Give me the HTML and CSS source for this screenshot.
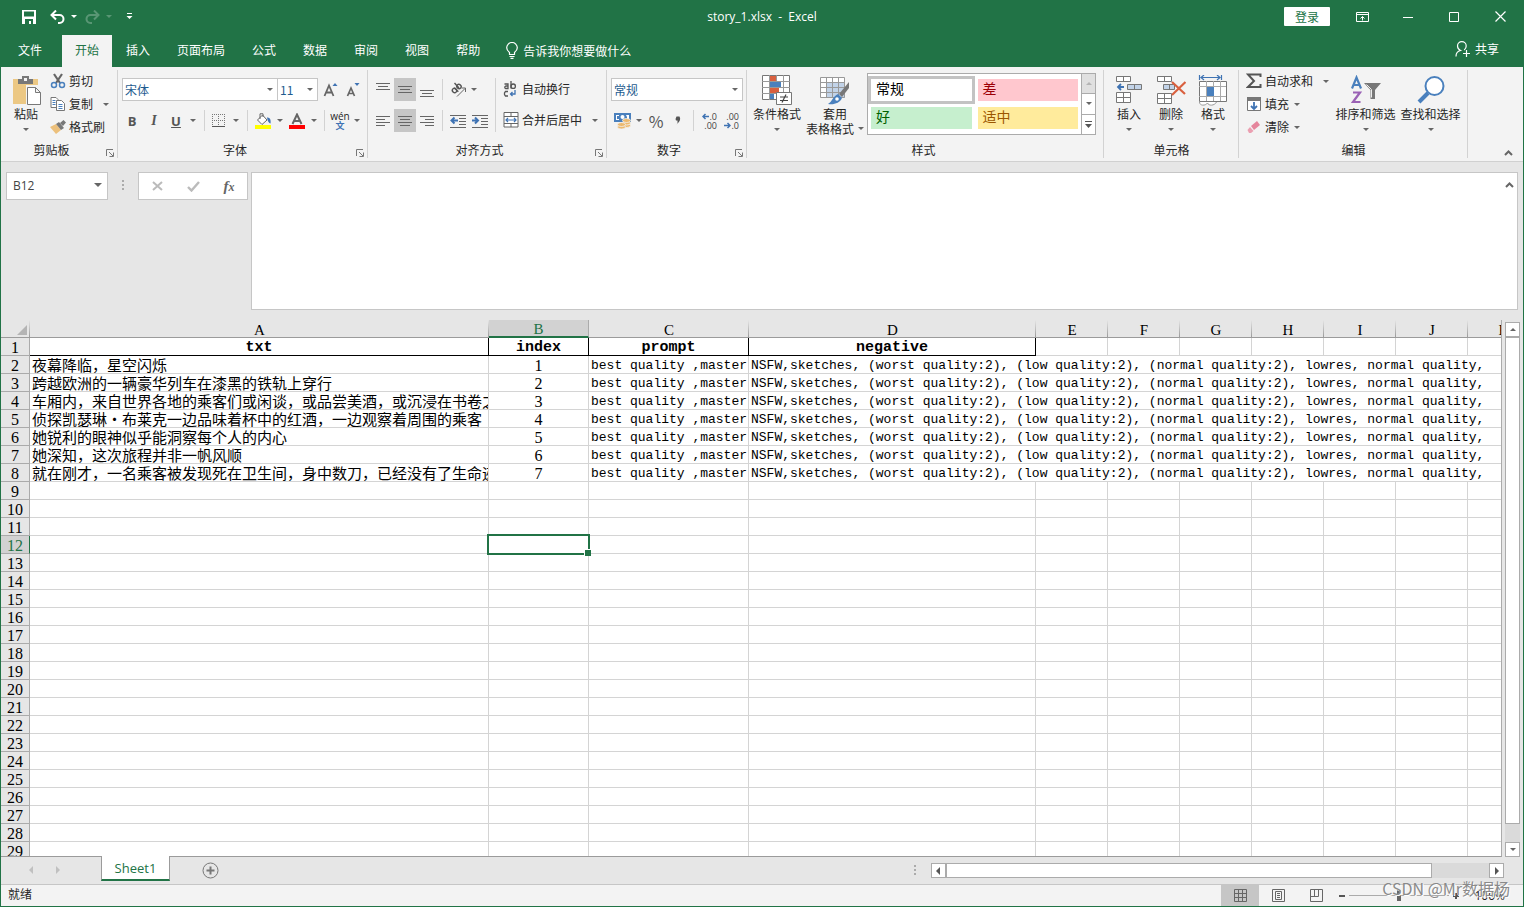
FILE: index.html
```html
<!DOCTYPE html>
<html lang="zh-CN">
<head>
<meta charset="utf-8">
<title>story_1.xlsx - Excel</title>
<link rel="stylesheet" href="styles.css">
</head>
<body>
<div class="window">
<header class="titlebar">
  <div class="quick">
    <button class="qbtn" aria-label="保存"><svg width="14" height="14" viewBox="0 0 14 14"><path fill="#fff" fill-rule="evenodd" d="M0 0h14v14H0zM2 1.500h10v5H2zM3 9h8v5H9v-3H7v3H3z"/></svg></button>
    <button class="qbtn wide" aria-label="撤消"><svg width="15" height="14" viewBox="0 0 15 14"><path d="M6 0.500L1.500 5l4.500 4.500M2 5h7.500a4 4 0 0 1 0 8H8" fill="none" stroke="#fff" stroke-width="2"/></svg><i class="caret light"></i></button>
    <button class="qbtn wide dim" aria-label="恢复"><svg width="15" height="14" viewBox="0 0 15 14"><path d="M9 0.500L13.500 5 9 9.500M13 5H5.500a4 4 0 0 0 0 8H7" fill="none" stroke="#fff" stroke-width="2"/></svg><i class="caret light"></i></button>
    <button class="qbtn" aria-label="自定义快速访问工具栏"><svg width="7" height="7" viewBox="0 0 7 7"><path d="M1 0h5v1H1zM0.500 3h6L3.500 6z" fill="#fff"/></svg></button>
  </div>
  <h1 class="title">story_1.xlsx&nbsp; -&nbsp; Excel</h1>
  <div class="wincontrols">
    <button class="signin">登录</button>
    <button class="wbtn" aria-label="功能区显示选项"><svg width="13" height="10" viewBox="0 0 13 10"><path d="M0.500 0.500h12v9H0.500zM0 2.500h13M6.500 8.500V4.500M4.500 6.500l2-2 2 2" fill="none" stroke="#fff"/></svg></button>
    <button class="wbtn" aria-label="最小化"><svg width="10" height="10" viewBox="0 0 10 10"><path d="M0 5.500h10" stroke="#fff"/></svg></button>
    <button class="wbtn" aria-label="最大化"><svg width="10" height="10" viewBox="0 0 10 10"><path d="M0.500 0.500h9v9h-9z" fill="none" stroke="#fff"/></svg></button>
    <button class="wbtn" aria-label="关闭"><svg width="11" height="11" viewBox="0 0 11 11"><path d="M0.500 0.500l10 10M10.500 0.500l-10 10" stroke="#fff" stroke-width="1.200"/></svg></button>
  </div>
</header>
<nav class="tabs">
  <button class="tab file">文件</button>
  <button class="tab active">开始</button>
  <button class="tab">插入</button>
  <button class="tab">页面布局</button>
  <button class="tab">公式</button>
  <button class="tab">数据</button>
  <button class="tab">审阅</button>
  <button class="tab">视图</button>
  <button class="tab">帮助</button>
  <button class="tell"><svg width="12" height="17" viewBox="0 0 12 17"><path d="M3.500 12.500v-2C1.500 9 0.700 7.500 0.700 5.800a5.300 5.300 0 0 1 10.600 0c0 1.700-.8 3.200-2.800 4.700v2zM3.500 14.500h5M4.500 16.300h3" fill="none" stroke="#fff" stroke-width="1.200"/></svg>告诉我你想要做什么</button>
  <button class="share"><svg width="16" height="16" viewBox="0 0 16 16"><path d="M1 15.500c0-3.500 2-5.500 4.500-6C3.500 8.500 2.500 7 2.500 5a4.300 4.300 0 0 1 8.700 0c0 1.600-.7 3-2 4M11.500 9v7M8 12.500h7" fill="none" stroke="#fff" stroke-width="1.200"/></svg>共享</button>
</nav>

<section class="ribbon">
  <div class="group clip">
    <div class="body">
      <button class="big paste"><svg width="30" height="31" viewBox="0 0 30 31"><path fill="#ecc884" d="M0 4h25v25H0z"/><path fill="#787878" d="M5 4h4V1h7v3h4v5H5z"/><path fill="#f3f3f3" d="M11 3h3v3h-3zM13 10h17v21H13z"/><path d="M14.500 12.500h8l5 5v12h-13zM22.500 12.500v5h5" fill="#fff" stroke="#787878"/></svg><span>粘贴</span><i class="caret"></i></button>
      <div class="stack">
        <button class="small"><svg width="16" height="16" viewBox="0 0 16 16"><path d="M4 1l6 9M12 1L6 10" stroke="#666" stroke-width="2.200"/><circle cx="4" cy="12" r="2.500" fill="none" stroke="#4a80bd" stroke-width="1.500"/><circle cx="12" cy="12" r="2.500" fill="none" stroke="#4a80bd" stroke-width="1.500"/></svg>剪切</button>
        <button class="small"><svg width="16" height="16" viewBox="0 0 16 16"><path d="M1 1.500h5l2 2v8H1z" fill="#fff" stroke="#777"/><path d="M6.500 4.500h5l3 3v7h-8z" fill="#fff" stroke="#777"/><path d="M2.500 4.500h3M2.500 6.500h3M2.500 8.500h3M8.500 8.500h4M8.500 10.500h4M8.500 12.500h4" stroke="#4a80bd"/></svg>复制<i class="caret far"></i></button>
        <button class="small"><svg width="16" height="16" viewBox="0 0 16 16"><path d="M0 8l6-3 5 6-5 4z" fill="#ecc07c"/><path d="M6 5l3-2 5 6-3 2zM10 4l3.500-3L16 3.500 13 7z" fill="#787878"/></svg>格式刷</button>
      </div>
    </div>
    <div class="label has-launch">剪贴板<button class="launch" aria-label="剪贴板选项"><svg width="8" height="8" viewBox="0 0 8 8"><path d="M0.500 7V0.500H7M3 3l4 4M7.500 3.500v4h-4" fill="none" stroke="#777"/></svg></button></div>
  </div>

  <div class="group font">
    <div class="body rows">
      <div class="row">
        <label class="combo grow"><select aria-label="字体"><option>宋体</option></select></label><label class="combo size"><select aria-label="字号"><option>11</option></select></label>
        <button class="ib fs" aria-label="增大字号"><svg width="16" height="16" viewBox="0 0 16 16"><path d="M1.500 14L6 3.500 10.500 14M3 10.500h6" fill="none" stroke="#666" stroke-width="1.800"/><path d="M9.500 4l2.500-3 2.500 3z" fill="#3f73b3"/></svg></button>
        <button class="ib" aria-label="减小字号"><svg width="16" height="16" viewBox="0 0 16 16"><path d="M2.500 14L6 6l3.500 8M4 11.500h4" fill="none" stroke="#666" stroke-width="1.700"/><path d="M9.500 1h5L12 4z" fill="#3f73b3"/></svg></button>
      </div>
      <div class="row">
        <button class="ib n b">B</button><button class="ib w i">I</button><button class="ib n u">U</button><button class="drop" aria-label="下划线选项"><i class="caret"></i></button>
        <span class="sep"></span>
        <button class="ib n" aria-label="边框"><svg width="14" height="14" viewBox="0 0 14 14"><path d="M0.500 0v13M6.500 0v13M12.500 0v13M0 0.500h13M0 6.500h13" stroke="#777" stroke-dasharray="1 1"/><path d="M0 12.500h13" stroke="#555"/></svg></button><button class="drop" aria-label="边框选项"><i class="caret"></i></button>
        <span class="sep"></span>
        <button class="ib" aria-label="填充颜色"><svg width="17" height="16" viewBox="0 0 17 16"><path d="M2.500 7l5-5 4.500 5-5 4.500zM5 6V0.800h3V4" fill="#fff" stroke="#666"/><path d="M12 4.500c3 0 4 2 3.500 6-1.500-.5-3-2-3.500-6z" fill="#3f73b3"/><path d="M0 12h16v4H0z" fill="#ff0"/></svg></button><button class="drop s" aria-label="填充颜色选项"><i class="caret"></i></button>
        <button class="ib" aria-label="字体颜色"><svg width="16" height="16" viewBox="0 0 16 16"><path d="M3.500 11L8 1.500 12.500 11M5 8h6" fill="none" stroke="#666" stroke-width="2"/><path d="M0 12h16v4H0z" fill="#f00"/></svg></button><button class="drop s" aria-label="字体颜色选项"><i class="caret"></i></button>
        <span class="sep"></span>
        <button class="ib wen"><span>wén</span><b>文</b></button><button class="drop s" aria-label="拼音选项"><i class="caret"></i></button>
      </div>
    </div>
    <div class="label has-launch">字体<button class="launch" aria-label="字体选项"><svg width="8" height="8" viewBox="0 0 8 8"><path d="M0.500 7V0.500H7M3 3l4 4M7.500 3.500v4h-4" fill="none" stroke="#777"/></svg></button></div>
  </div>

  <div class="group align">
    <div class="body">
      <div class="rows">
        <div class="row">
          <button class="ib" aria-label="顶端对齐"><svg width="14" height="14" viewBox="0 0 14 14"><path d="M0 .5h14M2 3.500h10M0 6.500h14" stroke="#666"/></svg></button><button class="ib on" aria-label="垂直居中"><svg width="14" height="14" viewBox="0 0 14 14"><path d="M0 3.500h14M2 6.500h10M0 9.500h14" stroke="#666"/></svg></button><button class="ib" aria-label="底端对齐"><svg width="14" height="14" viewBox="0 0 14 14"><path d="M0 7.500h14M2 10.500h10M0 13.500h14" stroke="#666"/></svg></button>
          <span class="sep"></span>
          <button class="ib" aria-label="方向"><svg width="17" height="16" viewBox="0 0 17 16"><g fill="none" stroke="#555" stroke-width="1.400"><ellipse cx="4.500" cy="8.500" rx="2" ry="2.300" transform="rotate(-45 4.500 8.500)"/><path d="M4.300 5.800l4 4"/><ellipse cx="9" cy="4.500" rx="2" ry="2.300" transform="rotate(-45 9 4.500)"/><path d="M4.500 1l4.500 5"/></g><path d="M7 14.500l8-8M11.500 6H15.500v4" fill="none" stroke="#666"/></svg></button><button class="drop x" aria-label="方向选项"><i class="caret"></i></button>
        </div>
        <div class="row">
          <button class="ib" aria-label="左对齐"><svg width="14" height="12" viewBox="0 0 14 12"><path d="M0 1.500h14M0 4.500h9M0 7.500h14M0 10.500h9" stroke="#666"/></svg></button><button class="ib on" aria-label="居中"><svg width="14" height="12" viewBox="0 0 14 12"><path d="M0 1.500h14M2 4.500h10M0 7.500h14M2 10.500h10" stroke="#666"/></svg></button><button class="ib" aria-label="右对齐"><svg width="14" height="12" viewBox="0 0 14 12"><path d="M0 1.500h14M5 4.500h9M0 7.500h14M5 10.500h9" stroke="#666"/></svg></button>
          <span class="sep"></span>
          <button class="ib" aria-label="减少缩进"><svg width="16" height="14" viewBox="0 0 16 14"><path d="M0 1.500h16M9 4.500h7M9 7.500h7M9 10.500h7M0 13.500h16" stroke="#666"/><path d="M8 6.500H2M4.500 3.500l-3 3 3 3" fill="none" stroke="#3f73b3" stroke-width="2"/></svg></button><button class="ib" aria-label="增加缩进"><svg width="16" height="14" viewBox="0 0 16 14"><path d="M0 1.500h16M9 4.500h7M9 7.500h7M9 10.500h7M0 13.500h16" stroke="#666"/><path d="M0 6.500h6M3 3.500l3 3-3 3" fill="none" stroke="#3f73b3" stroke-width="2"/></svg></button>
        </div>
      </div>
      <span class="sep tall"></span>
      <div class="rows">
        <button class="small tallrow"><svg width="16" height="16" viewBox="0 0 16 16"><g fill="none" stroke="#555" stroke-width="1.300"><path d="M1.500 3H5v4.500H2.700a1.300 1.300 0 0 1 0-2.500H5M8 0v7.500"/><circle cx="10.200" cy="5.200" r="2.200"/><path d="M5 10.500H2.500L1.500 12v1.500l1 1.500H5"/></g><path d="M12 9v4H7.500M9.500 11l-2 2 2 2" fill="none" stroke="#3f73b3" stroke-width="1.300"/></svg>自动换行</button>
        <button class="small tallrow"><svg width="16" height="16" viewBox="0 0 16 16"><path d="M1 .5h14v14.500H1zM1 4.500h14M1 11.500h14M8 0v4.500M8 11.500V15" fill="#fff" stroke="#666"/><path d="M3 8h10M5 6L3 8l2 2M11 6l2 2-2 2" fill="none" stroke="#3f73b3" stroke-width="1.200"/></svg>合并后居中<i class="caret far"></i></button>
      </div>
    </div>
    <div class="label has-launch">对齐方式<button class="launch" aria-label="对齐选项"><svg width="8" height="8" viewBox="0 0 8 8"><path d="M0.500 7V0.500H7M3 3l4 4M7.500 3.500v4h-4" fill="none" stroke="#777"/></svg></button></div>
  </div>

  <div class="group number">
    <div class="body rows">
      <div class="row"><label class="combo grow"><select aria-label="数字格式"><option>常规</option></select></label></div>
      <div class="row">
        <button class="ib" aria-label="会计数字格式"><svg width="17" height="16" viewBox="0 0 17 16"><path d="M0 0h17v9H0z" fill="#4a80bd"/><path d="M2 2h3v1H3v3h2v1H2zM12 2h3v5h-2V4z" fill="#fff"/><circle cx="8.500" cy="4" r="2" fill="#fff"/><g fill="#ecb96e" stroke="#f3f3f3" stroke-width=".8"><ellipse cx="12.500" cy="12.500" rx="4" ry="2"/><ellipse cx="12.500" cy="10" rx="4" ry="2"/><ellipse cx="12.500" cy="7.500" rx="4" ry="2"/><ellipse cx="7.500" cy="14" rx="4" ry="2"/><ellipse cx="7.500" cy="11.500" rx="4" ry="2"/></g></svg></button><button class="drop s" aria-label="会计格式选项"><i class="caret"></i></button>
        <button class="ib pct">%</button><button class="ib" aria-label="千位分隔样式"><svg width="6" height="9" viewBox="0 0 6 9"><path d="M1.500 0.500h3q1 1.500.5 3.500T1.500 8.500q1.500-2 1-4H1q-.8-2 .5-4z" fill="#555"/></svg></button>
        <span class="sep"></span>
        <button class="ib dec" aria-label="增加小数位数"><span><svg width="7" height="7" viewBox="0 0 7 7"><path d="M7 3.500H1M3.500 1L1 3.500 3.500 6" fill="none" stroke="#3f73b3" stroke-width="1.500"/></svg>.0</span><span>.00</span></button><button class="ib dec" aria-label="减少小数位数"><span>.00</span><span><svg width="7" height="7" viewBox="0 0 7 7"><path d="M0 3.500h6M3.500 1L6 3.500 3.500 6" fill="none" stroke="#3f73b3" stroke-width="1.500"/></svg>.0</span></button>
      </div>
    </div>
    <div class="label has-launch">数字<button class="launch" aria-label="数字选项"><svg width="8" height="8" viewBox="0 0 8 8"><path d="M0.500 7V0.500H7M3 3l4 4M7.500 3.500v4h-4" fill="none" stroke="#777"/></svg></button></div>
  </div>

  <div class="group styles">
    <div class="body">
      <button class="big cond"><svg width="30" height="31" viewBox="0 0 30 31"><path d="M.5.5h27v24H.5z" fill="#fff" stroke="#777"/><path d="M7.500 0v25M14.500 0v25M21.500 0v25M0 6.500h28M0 12.500h28M0 18.500h28" stroke="#999"/><path d="M8 1h6v5H8zM8 13h9v5H8z" fill="#d9603f"/><path d="M8 7h11v5H8zM8 19h4v5H8z" fill="#4a80bd"/><path d="M14.500 17.500h15v12h-15z" fill="#fff" stroke="#777"/><path d="M18 22h8M18 25.500h8M24 19.500l-4 8" stroke="#444" stroke-width="1.200"/></svg><span>条件格式</span><i class="caret"></i></button>
      <button class="big tblfmt"><svg width="30" height="31" viewBox="0 0 30 31"><path d="M.5 2.500h24v20H.5z" fill="#fff"/><path d="M7 8h18v15H7z" fill="#c2d3e8"/><path d="M.5 2.500h24v20H.5zM6.500 2v20M12.500 2v20M18.500 2v20M0 7.500h25M0 12.500h25M0 17.500h25" fill="none" stroke="#999"/><path d="M29 7v6l-7 9-3-3z" fill="#777"/><path d="M18 19l4 4c-2 5-8 7-14 6 4-2 5-8 10-10z" fill="#4a80bd"/><circle cx="17" cy="24" r="1.800" fill="#fff"/></svg><span>套用</span><span>表格格式<i class="caret"></i></span></button>
      <div class="gallery">
        <div class="cells"><button class="st normal">常规</button><button class="st bad">差</button><button class="st good">好</button><button class="st neutral">适中</button></div>
        <div class="gscroll"><button class="off" aria-label="上一行"><i class="caret up"></i></button><button aria-label="下一行"><i class="caret"></i></button><button aria-label="其他"><svg width="7" height="7" viewBox="0 0 7 7"><path d="M0 0h7v1H0zM0 3h7L3.500 7z" fill="#555"/></svg></button></div>
      </div>
    </div>
    <div class="label">样式</div>
  </div>

  <div class="group cellsg">
    <div class="body">
      <button class="big c42"><svg width="30" height="31" viewBox="0 0 30 31"><path d="M2.500 1.500h14v5h-14zM9.500 1.500v5M2.500 17.500h14v10h-14zM9.500 17.500v10M2.500 22.500h14" fill="#fff" stroke="#777"/><path d="M13.500 9.500h14v5h-14zM20.500 9.500v5" fill="#c2d3e8" stroke="#777"/><path d="M10 12H4M7 9l-3 3 3 3" fill="none" stroke="#3f73b3" stroke-width="1.800"/></svg><span>插入</span><i class="caret"></i></button>
      <button class="big c42"><svg width="30" height="31" viewBox="0 0 30 31"><path d="M1.500 1.500h14v5h-14zM8.500 1.500v5M1.500 18.500h14v10h-14zM8.500 18.500v10M1.500 23.500h14" fill="#fff" stroke="#777"/><path d="M7.500 9.500h11v5h-11zM13.500 9.500v5" fill="#c2d3e8" stroke="#777"/><path d="M16 7l13 12M29.500 7L16 20" stroke="#d9603f" stroke-width="2.200"/></svg><span>删除</span><i class="caret"></i></button>
      <button class="big c42"><svg width="30" height="31" viewBox="0 0 30 31"><path d="M1.500 0v5M23.500 0v5M3 2.500h19M6 0L3 2.500 6 5M19 0l3 2.500L19 5" fill="none" stroke="#3f73b3" stroke-width="1.200"/><path d="M1.500 6.500h27v20h-27z" fill="#fff" stroke="#777"/><path d="M8.500 6v20M15.500 6v20M22.500 6v20M1 11.500h27M1 21.500h27" stroke="#aaa"/><path d="M9 12h7v9H9z" fill="#4a80bd"/><path d="M1.500 27c0 4 6 4 8 1 1 3 7 3 9-1" fill="#fff" stroke="#999"/></svg><span>格式</span><i class="caret"></i></button>
    </div>
    <div class="label">单元格</div>
  </div>

  <div class="group edit">
    <div class="body">
      <div class="stack">
        <button class="small"><svg width="16" height="16" viewBox="0 0 16 16"><path d="M14.500 4V1.500H2L8 8l-6 6h12.500V11" fill="none" stroke="#555" stroke-width="2"/></svg>自动求和<i class="caret far"></i></button>
        <button class="small"><svg width="16" height="16" viewBox="0 0 16 16"><path d="M1.500 1.500h13v13h-13z" fill="#fff" stroke="#777"/><path d="M1 1h14v4H1z" fill="#777"/><path d="M8 6v7M5 10l3 3 3-3" fill="none" stroke="#3f73b3" stroke-width="1.800"/></svg>填充<i class="caret"></i></button>
        <button class="small"><svg width="16" height="16" viewBox="0 0 16 16"><path d="M5 7l6-5 3 4-6 5z" fill="#e5859c"/><path d="M4 8l3.500 4L5 14H3L1.500 11z" fill="#eb9fb1"/></svg>清除<i class="caret"></i></button>
      </div>
      <button class="big c64"><svg width="30" height="31" viewBox="0 0 30 31"><path d="M1 13.500L5.500 2.500 10 13.500M2.500 10h6" fill="none" stroke="#4a80bd" stroke-width="2.200"/><path d="M2 17.500h7L2 27h7.500" fill="none" stroke="#9a62b5" stroke-width="2.200"/><path d="M13 8h17l-6 7v9h-4.500v-9z" fill="#777"/><path d="M15.500 9.500l5 5v8" fill="none" stroke="#eee"/></svg><span>排序和筛选</span><i class="caret"></i></button>
      <button class="big c64"><svg width="30" height="31" viewBox="0 0 30 31"><path d="M3 27l9-9" stroke="#4a80bd" stroke-width="4"/><circle cx="18.500" cy="11" r="9" fill="#fff" stroke="#4a80bd" stroke-width="2"/></svg><span>查找和选择</span><i class="caret"></i></button>
    </div>
    <div class="label">编辑</div>
  </div>
  <button class="collapse" aria-label="折叠功能区"><svg width="9" height="6" viewBox="0 0 9 6"><path d="M1 5l3.500-3.500L8 5" fill="none" stroke="#666" stroke-width="2"/></svg></button>
</section>

<section class="formula">
  <label class="combo name"><select aria-label="名称框"><option>B12</option></select></label>
  <span class="dots"></span>
  <div class="fx">
    <button aria-label="取消"><svg width="11" height="10" viewBox="0 0 11 10"><path d="M1 1l9 8M10 1L1 9" stroke="#bbb" stroke-width="2"/></svg></button>
    <button aria-label="输入"><svg width="13" height="11" viewBox="0 0 13 11"><path d="M1 6l3.500 3.500L12 1" fill="none" stroke="#bbb" stroke-width="2.400"/></svg></button>
    <button class="fn"><i>f<small>x</small></i></button>
  </div>
  <div class="finput"><textarea aria-label="编辑栏"></textarea><button aria-label="折叠编辑栏"><svg width="9" height="6" viewBox="0 0 9 6"><path d="M1 5l3.500-3.500L8 5" fill="none" stroke="#666" stroke-width="2"/></svg></button></div>
</section>

<main class="sheet">
  <div class="gridwrap">
  <table class="grid">
    <colgroup><col class="ch"><col class="ca"><col class="cb"><col class="cc"><col class="cd"><col class="ce"><col class="ce"><col class="ce"><col class="ce"><col class="ce"><col class="ce"><col class="ce"></colgroup>
    <thead><tr><th class="corner"><svg width="10" height="10" viewBox="0 0 10 10"><path d="M10 0v10H0z" fill="#b4b4b4"/></svg></th><th>A</th><th class="sel">B</th><th>C</th><th>D</th><th>E</th><th>F</th><th>G</th><th>H</th><th>I</th><th>J</th><th>K</th></tr></thead>
    <tbody>
    <tr class="head"><th>1</th><td class="hd">txt</td><td class="hd">index</td><td class="hd">prompt</td><td class="hd">negative</td><td></td><td></td><td></td><td></td><td></td><td></td><td></td></tr>
    <tr><th>2</th><td class="zh">夜幕降临，星空闪烁</td><td class="num">1</td><td class="en">best quality ,master</td><td class="en" colspan="8">NSFW,sketches, (worst quality:2), (low quality:2), (normal quality:2), lowres, normal quality,</td></tr>
    <tr><th>3</th><td class="zh">跨越欧洲的一辆豪华列车在漆黑的铁轨上穿行</td><td class="num">2</td><td class="en">best quality ,master</td><td class="en" colspan="8">NSFW,sketches, (worst quality:2), (low quality:2), (normal quality:2), lowres, normal quality,</td></tr>
    <tr><th>4</th><td class="zh">车厢内，来自世界各地的乘客们或闲谈，或品尝美酒，或沉浸在书卷之</td><td class="num">3</td><td class="en">best quality ,master</td><td class="en" colspan="8">NSFW,sketches, (worst quality:2), (low quality:2), (normal quality:2), lowres, normal quality,</td></tr>
    <tr><th>5</th><td class="zh">侦探凯瑟琳·布莱克一边品味着杯中的红酒，一边观察着周围的乘客</td><td class="num">4</td><td class="en">best quality ,master</td><td class="en" colspan="8">NSFW,sketches, (worst quality:2), (low quality:2), (normal quality:2), lowres, normal quality,</td></tr>
    <tr><th>6</th><td class="zh">她锐利的眼神似乎能洞察每个人的内心</td><td class="num">5</td><td class="en">best quality ,master</td><td class="en" colspan="8">NSFW,sketches, (worst quality:2), (low quality:2), (normal quality:2), lowres, normal quality,</td></tr>
    <tr><th>7</th><td class="zh">她深知，这次旅程并非一帆风顺</td><td class="num">6</td><td class="en">best quality ,master</td><td class="en" colspan="8">NSFW,sketches, (worst quality:2), (low quality:2), (normal quality:2), lowres, normal quality,</td></tr>
    <tr><th>8</th><td class="zh">就在刚才，一名乘客被发现死在卫生间，身中数刀，已经没有了生命迹</td><td class="num">7</td><td class="en">best quality ,master</td><td class="en" colspan="8">NSFW,sketches, (worst quality:2), (low quality:2), (normal quality:2), lowres, normal quality,</td></tr>
    <tr><th>9</th><td><td><td><td><td><td><td><td><td><td><td></tr>
    <tr><th>10</th><td><td><td><td><td><td><td><td><td><td><td></tr>
    <tr><th>11</th><td><td><td><td><td><td><td><td><td><td><td></tr>
    <tr><th class="sel">12</th><td></td><td class="cursor"><span></span></td><td><td><td><td><td><td><td><td><td></tr>
    <tr><th>13</th><td><td><td><td><td><td><td><td><td><td><td></tr>
    <tr><th>14</th><td><td><td><td><td><td><td><td><td><td><td></tr>
    <tr><th>15</th><td><td><td><td><td><td><td><td><td><td><td></tr>
    <tr><th>16</th><td><td><td><td><td><td><td><td><td><td><td></tr>
    <tr><th>17</th><td><td><td><td><td><td><td><td><td><td><td></tr>
    <tr><th>18</th><td><td><td><td><td><td><td><td><td><td><td></tr>
    <tr><th>19</th><td><td><td><td><td><td><td><td><td><td><td></tr>
    <tr><th>20</th><td><td><td><td><td><td><td><td><td><td><td></tr>
    <tr><th>21</th><td><td><td><td><td><td><td><td><td><td><td></tr>
    <tr><th>22</th><td><td><td><td><td><td><td><td><td><td><td></tr>
    <tr><th>23</th><td><td><td><td><td><td><td><td><td><td><td></tr>
    <tr><th>24</th><td><td><td><td><td><td><td><td><td><td><td></tr>
    <tr><th>25</th><td><td><td><td><td><td><td><td><td><td><td></tr>
    <tr><th>26</th><td><td><td><td><td><td><td><td><td><td><td></tr>
    <tr><th>27</th><td><td><td><td><td><td><td><td><td><td><td></tr>
    <tr><th>28</th><td><td><td><td><td><td><td><td><td><td><td></tr>
    <tr><th>29</th><td><td><td><td><td><td><td><td><td><td><td></tr>
    </tbody>
  </table>
  </div>
  <div class="vscroll"><button aria-label="向上滚动"><i class="caret up"></i></button><div class="vthumb"></div><div class="vtrack"></div><button aria-label="向下滚动"><i class="caret"></i></button></div>
</main>

<footer class="sheetbar">
  <button class="nav" aria-label="上一个工作表"><svg width="5" height="8" viewBox="0 0 5 8"><path d="M5 0v8L1 4z" fill="#c0c0c0"/></svg></button>
  <button class="nav" aria-label="下一个工作表"><svg width="5" height="8" viewBox="0 0 5 8"><path d="M0 0v8l4-4z" fill="#c0c0c0"/></svg></button>
  <button class="sheettab">Sheet1</button>
  <button class="add" aria-label="新工作表"><svg width="17" height="17" viewBox="0 0 17 17"><circle cx="8.500" cy="8.500" r="7.500" fill="none" stroke="#777"/><path d="M8.500 4.500v8M4.500 8.500h8" stroke="#777" stroke-width="2"/></svg></button>
  <span class="dots"></span>
  <div class="hscroll"><button aria-label="向左滚动"><svg width="5" height="8" viewBox="0 0 5 8"><path d="M4 0v8L0 4z" fill="#555"/></svg></button><div class="hthumb"></div><div class="htrack"></div><button aria-label="向右滚动"><svg width="5" height="8" viewBox="0 0 5 8"><path d="M1 0v8l4-4z" fill="#555"/></svg></button></div>
</footer>
<footer class="status">
  <span>就绪</span>
  <div class="view">
    <button class="vb on" aria-label="普通"><svg width="13" height="13" viewBox="0 0 13 13"><path d="M.5.5h12v12H.5zM4.500 0v13M8.500 0v13M0 4.500h13M0 8.500h13" fill="none" stroke="#666"/></svg></button>
    <button class="vb" aria-label="页面布局"><svg width="13" height="13" viewBox="0 0 13 13"><path d="M.5.5h12v12H.5zM3.500 2.500h6v8h-6zM5 4.500h3M5 6.500h3M5 8.500h3" fill="none" stroke="#666"/></svg></button>
    <button class="vb" aria-label="分页预览"><svg width="13" height="13" viewBox="0 0 13 13"><path d="M.5.5h12v12H.5zM4.500 0v7M8.500 0v7.500M0 7.500h8.500" fill="none" stroke="#666"/></svg></button>
    <button class="zm" aria-label="缩小"><svg width="6" height="6" viewBox="0 0 6 6"><path d="M0 3h6" stroke="#555" stroke-width="2"/></svg></button><input type="range" class="zoom" aria-label="缩放" min="0" max="100" value="50"><button class="zm" aria-label="放大"><svg width="6" height="6" viewBox="0 0 6 6"><path d="M0 3h6M3 0v6" stroke="#555" stroke-width="2"/></svg></button>
    <span class="pct100">100%</span>
  </div>
</footer>
<div class="watermark">CSDN @Mr数据杨</div>
</div>
</body>
</html>
```
FILE: styles.css
```css
* { box-sizing: border-box; }
body { margin: 0; font: 12px/16px "Noto Sans CJK SC", "Open Sans", sans-serif; color: #262626; }
button { margin: 0; padding: 0; border: 0; background: none; font: inherit; color: inherit; }
button, .row, .body { display: flex; align-items: center; }
button { justify-content: center; }
svg { display: block; flex: none; }
.window { position: relative; display: flex; flex-direction: column; height: 100vh; overflow: hidden; background: #e6e6e6; border: 1px solid #217346; border-top: 0; }
.caret { width: 0; height: 0; flex: none; border: 3px solid transparent; border-top-color: #666; border-bottom: 0; }
.caret.up { border-top: 0; border-bottom: 3px solid #666; }
.caret.light { border-top-color: #fff; }

.titlebar { display: grid; grid-template-columns: 1fr auto 1fr; align-items: center; height: 35px; padding-bottom: 2px; background: #217346; color: #fff; flex: none; }
.quick { display: flex; padding-left: 17px; }
.qbtn { width: 22px; height: 22px; margin-right: 9px; }
.qbtn.wide { width: 28px; gap: 6px; margin-right: 7px; }
.qbtn.dim { opacity: .25; margin-right: 6px; }
.title { margin: 0; font: 12px/16px "Open Sans", sans-serif; }
.wincontrols { display: flex; justify-content: flex-end; align-items: center; }
.signin { width: 46px; height: 19px; margin-right: 9px; background: #fff; color: #217346; border-radius: 1px; }
.wbtn { width: 46px; height: 28px; }

.tabs { display: flex; align-items: stretch; gap: 1px; height: 32px; padding-left: 4px; background: #217346; color: #fff; flex: none; }
.tab { padding: 0 13px 3px; }
.tab.file { margin-right: 6px; }
.tab.active { background: #f3f3f3; color: #217346; }
.tell { gap: 5px; margin-left: 12px; padding-bottom: 1px; }
.share { gap: 4px; margin: 0 24px 5px auto; }

.ribbon { display: flex; height: 95px; padding-top: 3px; background: #f3f3f3; border-bottom: 1px solid #d0d0d0; flex: none; }
.group { display: flex; flex-direction: column; background: linear-gradient(#d2d2d2, #d2d2d2) right top / 1px 88px no-repeat; padding: 0 4px; }
.body { height: 69px; align-items: flex-start; }
.label { position: relative; flex: 1; text-align: center; line-height: 22px; }
.label.has-launch { padding-right: 16px; }
.launch { position: absolute; right: 0; top: 10px; }
.clip { width: 117px; }
.font { width: 250px; }
.align { width: 239px; }
.number { width: 140px; }
.styles { width: 357px; padding: 0 4px 0 0; }
.cellsg { width: 135px; }
.edit { width: 229px; }
.big { flex-direction: column; justify-content: flex-start; padding-top: 5px; line-height: 15px; white-space: nowrap; }
.big > .caret { margin-top: 7px; }
.big span { display: flex; align-items: center; gap: 4px; }
.paste { width: 42px; }
.paste svg { margin-left: 4px; }
.cond { width: 60px; }
.tblfmt { width: 56px; }
.c42 { width: 42px; }
.c64 { width: 65px; }
.edit .stack { margin-right: 4px; }
.stack { display: flex; flex-direction: column; }
.small { justify-content: flex-start; gap: 3px; height: 23px; padding: 0 0 1px 3px; white-space: nowrap; }
.small .caret { margin-left: 2px; }
.small .caret.far { margin-left: 7px; }
.rows { display: flex; flex-direction: column; align-items: stretch; gap: 8px; padding-top: 8px; height: 69px; }
.row { height: 23px; flex: none; }
.combo { position: relative; display: block; height: 23px; background: #fff; border: 1px solid #c6c6c6; }
.combo select { appearance: none; display: block; width: 100%; height: 100%; padding: 0 16px 0 2px; border: 0; background: none; font: inherit; color: #1f5c8f; }
.combo::after { content: ""; position: absolute; right: 4px; top: 9px; border: 3px solid transparent; border-top-color: #666; border-bottom: 0; pointer-events: none; }
.combo.grow { flex: 1; }
.combo.size { width: 41px; margin-left: -1px; }
.ib { width: 22px; height: 23px; flex: none; }
.ib.n { width: 20px; }
.ib.w { width: 24px; }
.ib.on { background: #c6c6c6; }
.ib.fs { margin-left: 2px; }
.ib.b, .ib.i, .ib.u { color: #555; font: bold 13px/16px "Open Sans", sans-serif; }
.ib.i { font-family: "Liberation Serif", serif; font-style: italic; font-size: 14px; }
.ib.u { text-decoration: underline; }
.drop { width: 14px; height: 22px; flex: none; }
.drop.s { width: 12px; }
.drop.x { width: 10px; }
.sep { width: 1px; height: 21px; margin: 0 4px; background: #d2d2d2; flex: none; }
.sep.tall { height: 54px; margin-top: 8px; }
.wen { flex-direction: column; font: 10px/10px "Open Sans", sans-serif; }
.wen b { color: #3f73b3; font: bold 9px/10px "Noto Sans CJK SC", sans-serif; }
.pct { font-size: 16px; color: #555; }
.dec { flex-direction: column; align-items: flex-end; font: 9px/9px "Open Sans", sans-serif; color: #444; padding-right: 3px; }
.dec span { display: flex; align-items: center; }
.gallery { display: flex; flex: 1; height: 62px; margin: 3px 4px 0 4px; border: 1px solid #ababab; background: #fff; }
.cells { flex: 1; display: grid; grid-template-columns: 1fr 1fr; grid-template-rows: 22px 22px; gap: 6px; padding: 5px 3px; }
.st { justify-content: flex-start; padding: 0 0 4px 5px; font-size: 14px; }
.normal { color: #000; outline: 3px solid #c3c3c3; }
.bad { background: #ffc7ce; color: #9c0006; }
.good { background: #c6efce; color: #006100; }
.neutral { background: #ffeb9c; color: #9c5700; }
.gscroll { display: flex; flex-direction: column; width: 14px; border-left: 1px solid #ababab; }
.gscroll button { flex: 1; }
.gscroll button + button { border-top: 1px solid #ababab; }
.gscroll .off { background: #e0e0e0; }
.gscroll .off .caret { border-bottom-color: #b4b4b4; }
.collapse { align-self: flex-end; margin: 0 10px 5px auto; }

.formula { display: flex; align-items: flex-start; height: 158px; padding: 10px 5px 10px; flex: none; }
.combo.name { width: 102px; height: 28px; }
.combo.name select { color: #444; padding-left: 6px; font-family: "Open Sans", sans-serif; }
.combo.name::after { right: 5px; top: 10px; border-width: 4px 4px 0; }
.dots { width: 2px; height: 11px; margin: 8px 14px; background: repeating-linear-gradient(#ababab 0 2px, transparent 2px 4px); }
.fx { display: flex; width: 110px; height: 28px; background: #fff; border: 1px solid #c6c6c6; }
.fx button { flex: 1; }
.fn { font: bold 15px/16px "Liberation Serif", serif; color: #666; }
.fn small { font-size: 12px; }
.finput { display: flex; align-items: flex-start; flex: 1; align-self: stretch; margin-left: 3px; background: #fff; border: 1px solid #c6c6c6; }
.finput textarea { flex: 1; align-self: stretch; border: 0; background: none; resize: none; outline: 0; }
.finput button { margin: 9px 3px; }

.sheet { display: flex; flex: 1; min-height: 0; }
.gridwrap { flex: 1; min-width: 0; overflow: hidden; border-right: 1px solid #ababab; border-bottom: 1px solid #9b9b9b; background: #fff; }
.grid { table-layout: fixed; width: 1538px; border-collapse: separate; border-spacing: 0; color: #000; }
.ch { width: 29px; }
.ca { width: 459px; }
.cb { width: 100px; }
.cc { width: 160px; }
.cd { width: 287px; }
.ce { width: 72px; }
.grid th, .grid td { height: 18px; padding: 0; border: 0 solid #d4d4d4; border-width: 0 1px 1px 0; line-height: 17px; white-space: nowrap; overflow: hidden; }
.grid th { padding-top: 3px; font: 16px/14px "Liberation Serif", serif; background: #e6e6e6; border-color: #ababab; }
.grid thead th { font-size: 15px; border-right: 0; border-bottom-color: #9b9b9b; background: linear-gradient(#e6e6e6, #9b9b9b) right top / 1px 100% no-repeat #e6e6e6; }
.grid th.sel { background: #d2d2d2; color: #217346; border-right: 1px solid #217346; }
.grid thead th.sel { border-right-color: #ababab; border-bottom: 2px solid #217346; line-height: 13px; }
.corner svg { margin: 0 3px 0 auto; }
.grid .hd { padding-top: 3px; border-color: #000; font: bold 15px/14px "Liberation Mono", monospace; text-align: center; }
.grid .zh { padding-left: 2px; font-size: 15px; }
.grid .num { padding-top: 3px; font: 16px/14px "Liberation Serif", serif; text-align: center; }
.grid .en { padding: 3px 0 0 2px; font: 13px/14px "Liberation Mono", monospace; }
.grid .cursor { position: relative; overflow: visible; }
.cursor span { position: absolute; inset: -2px; border: 2px solid #217346; }
.cursor span::after { content: ""; position: absolute; right: -3px; bottom: -3px; width: 6px; height: 6px; background: #217346; border: 1px solid #fff; border-width: 1px 0 0 1px; }
.vscroll { display: flex; flex-direction: column; width: 15px; margin: 2px 3px 0; }
.vscroll button, .hscroll button { background: #fff; border: 1px solid #ababab; flex: none; }
.vscroll button { height: 15px; }
.vthumb { flex: 34; background: #fff; border: 1px solid #ababab; }
.vtrack { flex: 1; min-height: 18px; background: #dadada; }

.sheetbar { display: flex; align-items: flex-start; height: 27px; padding: 0 19px 0 15px; flex: none; }
.nav { width: 28px; height: 26px; }
.sheettab { width: 69px; height: 25px; margin: -1px 32px 0 29px; background: #fff; border: 1px solid #9b9b9b; border-width: 0 1px 2px; border-bottom-color: #217346; color: #217346; font: 13px/16px "Open Sans", sans-serif; z-index: 1; }
.add { height: 26px; }
.sheetbar .dots { margin: 8px 15px 0 auto; }
.hscroll { display: flex; width: 39%; max-width: 573px; height: 15px; margin-top: 6px; }
.hscroll button { width: 15px; }
.hthumb { flex: 85; background: #fff; border: 1px solid #ababab; }
.htrack { flex: 10; background: #dadada; }

.status { display: flex; justify-content: space-between; align-items: center; height: 22px; padding-left: 7px; background: #f3f3f3; border-top: 1px solid #c6c6c6; flex: none; }
.status > span { padding-bottom: 3px; }
.view { display: flex; align-items: center; align-self: stretch; padding-right: 18px; }
.vb { width: 38px; align-self: stretch; }
.vb.on { background: #c6c6c6; }
.zm { width: 14px; height: 14px; }
.zoom { appearance: none; width: 100px; height: 12px; margin: 0; background: linear-gradient(#ababab, #ababab) center / 100% 1px no-repeat; }
.zoom::-webkit-slider-thumb { appearance: none; width: 4px; height: 11px; background: #666; }
.pct100 { width: 42px; text-align: right; font-family: "Open Sans", sans-serif; }
.watermark { position: absolute; right: 13px; bottom: 8px; font: 16px/20px "Noto Sans CJK SC", sans-serif; color: #8a8a8a; text-shadow: 1px 1px 0 #fff; pointer-events: none; }
```
